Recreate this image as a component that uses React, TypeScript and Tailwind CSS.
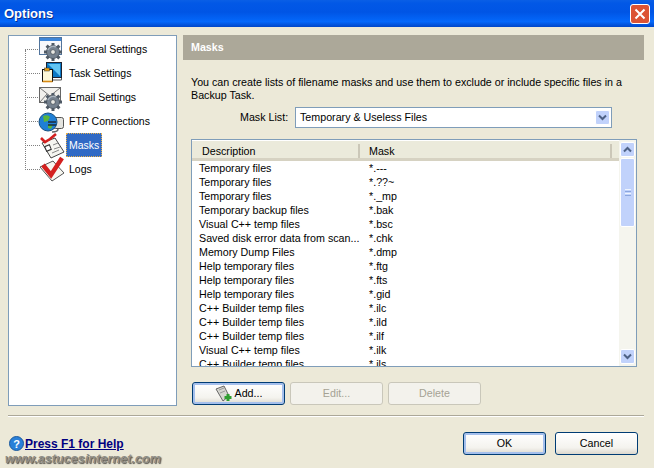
import type { ReactNode } from 'react';

const rows = [
  ['Temporary files', '*.---'],
  ['Temporary files', '*.??~'],
  ['Temporary files', '*._mp'],
  ['Temporary backup files', '*.bak'],
  ['Visual C++ temp files', '*.bsc'],
  ['Saved disk error data from scan...', '*.chk'],
  ['Memory Dump Files', '*.dmp'],
  ['Help temporary files', '*.ftg'],
  ['Help temporary files', '*.fts'],
  ['Help temporary files', '*.gid'],
  ['C++ Builder temp files', '*.ilc'],
  ['C++ Builder temp files', '*.ild'],
  ['C++ Builder temp files', '*.ilf'],
  ['Visual C++ temp files', '*.ilk'],
  ['C++ Builder temp files', '*.ils'],
];

function Gear({ x, y }: { x: number; y: number }) {
  return (
    <g transform={`translate(${x} ${y})`}>
      <path d="M0-9V9M-9 0H9M-6.4-6.4L6.4 6.4M-6.4 6.4L6.4-6.4" stroke="#4f5a66" strokeWidth="3" />
      <circle r="6.5" fill="#76828f" stroke="#46505b" strokeWidth=".8" />
      <path d="M-5-2A5.5 5.5 0 0 1 3-5" stroke="#a9b3bd" strokeWidth="1.4" fill="none" />
      <circle r="2.4" fill="#e9e9e4" stroke="#46505b" strokeWidth=".8" />
    </g>
  );
}

const icons: Record<string, ReactNode> = {
  general: (
    <>
      <rect x=".5" y="1.5" width="22" height="17" fill="#f7f8fb" stroke="#51749c" />
      <rect x="1" y="2" width="21" height="3" fill="#3e86d8" />
      <Gear x={14} y={16} />
    </>
  ),
  task: (
    <>
      <rect x="7.5" y="2.5" width="15" height="15" fill="#0b78c4" stroke="#1d2230" />
      <path d="M9 4h12v12z" fill="#62c4f2" />
      <path d="M22.5 18v2h-9" stroke="#555" fill="none" />
      <rect x="3.5" y="9.5" width="10" height="12" fill="#fdf8d8" stroke="#111" />
      <rect x="5.5" y="8" width="5" height="3" fill="#e8a31d" stroke="#333" strokeWidth=".5" />
      <path d="M3.5 21.5h10" stroke="#d98a12" strokeWidth="1.6" />
    </>
  ),
  email: (
    <>
      <rect x=".5" y="3.5" width="21" height="15" fill="#f1f0ec" stroke="#666" />
      <path d="M1 4l10 8 10-8M1 18l7-8M21 18l-7-8" stroke="#777" fill="none" />
      <Gear x={14} y={18} />
    </>
  ),
  ftp: (
    <>
      <rect x="14.5" y="9.5" width="10" height="11" rx="2" fill="#e4e4e0" stroke="#555" />
      <path d="M19 21q0 3-6 3" stroke="#666" fill="none" strokeWidth="1.5" />
      <circle cx="9" cy="14" r="9" fill="#1f7fd6" stroke="#17507f" />
      <path d="M4 8q5-2 7 1l-2 4-4 1zM9 16l5 1-2 4-3-1z" fill="#59b53c" />
      <path d="M9 14h8M9 17h8" stroke="#1b2c3c" strokeWidth="1.5" />
    </>
  ),
  masks: (
    <>
      <path d="M3 11l13-5 9 14-13 6z" fill="#f5f5f0" stroke="#444" />
      <path d="M14 13l5-2M15 17l6-2M13 21l7-3" stroke="#888" />
      <rect x="6.5" y="13.5" width="5" height="5" fill="#fff" stroke="#333" transform="rotate(-22 9 16)" />
      <path d="M2 6l4 4 5-3 6-5" fill="none" stroke="#d3201f" strokeWidth="2.6" />
    </>
  ),
  logs: (
    <>
      <path d="M1 11l13-6 11 12-12 8z" fill="#f7f6f0" stroke="#555" />
      <path d="M4 9l8 10 11-17" fill="none" stroke="#d3201f" strokeWidth="4.5" />
    </>
  ),
};

const tree = [
  ['General Settings', 'general'],
  ['Task Settings', 'task'],
  ['Email Settings', 'email'],
  ['FTP Connections', 'ftp'],
  ['Masks', 'masks'],
  ['Logs', 'logs'],
];

function XpButton({
  children,
  disabled,
  focused,
  className,
}: {
  children: ReactNode;
  disabled?: boolean;
  focused?: boolean;
  className: string;
}) {
  return (
    <button
      className={`flex h-[23px] items-center justify-center rounded-[3px] border ${
        disabled
          ? 'border-[#c9c7ba] bg-[#f3f2ec] text-[#a5a294]'
          : 'border-[#003c74] bg-[linear-gradient(#fff,#f4f3ee_70%,#dcd8ce)] text-black'
      } ${focused ? 'shadow-[inset_0_0_0_2px_#a4bfec]' : ''} ${className}`}
    >
      {children}
    </button>
  );
}

function ScrollButton({ up }: { up?: boolean }) {
  return (
    <div className="flex h-[15px] w-[15px] items-center justify-center rounded-[2px] border border-white bg-[#c1d2fb]">
      <svg width="9" height="7" viewBox="0 0 9 7">
        <path d={up ? 'M1 5.5l3.5-3.5 3.5 3.5' : 'M1 1.5l3.5 3.5 3.5-3.5'} fill="none" stroke="#4d6185" strokeWidth="2" />
      </svg>
    </div>
  );
}

export default function App() {
  return (
    <div className="flex h-[468px] w-[654px] flex-col overflow-hidden bg-[#ece9d8] font-['Liberation_Sans',sans-serif] text-[10.7px] text-black">
      <div className="flex h-[27px] shrink-0 items-center justify-between bg-[linear-gradient(#0a5fe6,#0258e6_12%,#0055e5_45%,#0468fb_80%,#0046c8)] pl-[4px] pr-[4px]">
        <span className="pt-[1px] text-[13px] font-bold text-white [text-shadow:1px_1px_#0a2f8c]">Options</span>
        <div className="flex h-[20px] w-[20px] items-center justify-center rounded-[3px] border border-white bg-[#dc5334]">
          <svg width="12" height="12" viewBox="0 0 12 12">
            <path d="M1.5 1.5l9 9M10.5 1.5l-9 9" stroke="#fff" strokeWidth="2" />
          </svg>
        </div>
      </div>

      <div className="flex pl-[8px] pt-[8px]">
        <div className="relative h-[371px] w-[169px] border border-[#7f9db9] bg-white pt-[1px]">
          <div className="absolute left-[16px] top-[14px] h-[120px] border-l border-dotted border-[#808080]" />
          {tree.map(([label, icon]) => (
            <div key={label} className="flex h-[24px] items-center pl-[16px]">
              <div className="w-[15px] border-t border-dotted border-[#808080]" />
              <svg width="26" height="26" viewBox="0 0 26 26" className="-ml-[1px] shrink-0 overflow-visible">
                {icons[icon]}
              </svg>
              <span
                className={`ml-[1px] flex h-[24px] items-center px-[2px] text-[10.5px] leading-none ${
                  label === 'Masks' ? 'border border-dotted border-[#e8b04a] bg-[#316ac5] text-white' : 'border border-transparent'
                }`}
              >
                {label}
              </span>
            </div>
          ))}
        </div>

        <div className="ml-[6px] w-[461px]">
          <div className="flex h-[25px] items-center bg-[#aca899] pl-[8px] font-bold text-white">Masks</div>
          <p className="mt-[16px] w-[440px] pl-[8px] leading-[13px]">
            You can create lists of filename masks and use them to exclude or include specific files in a Backup Task.
          </p>
          <div className="mt-[5px] flex h-[21px] items-center pl-[57px]">
            <span className="w-[55px]">Mask List:</span>
            <div className="flex h-[21px] w-[317px] items-center justify-between border border-[#7f9db9] bg-white pl-[4px] pr-[1px]">
              <span>Temporary &amp; Useless Files</span>
              <ScrollButton />
            </div>
          </div>

          <div className="ml-[8px] mt-[11px] flex h-[228px] w-[446px] border border-[#7f9db9] bg-white">
            <div className="min-w-0 flex-1 overflow-hidden">
              <div className="mt-[1px] flex h-[20px] items-center border-b-[3px] border-[#d6d2c2] bg-[#ebeadb] pt-[2px]">
                <span className="w-[168px] border-r-2 border-[#cbc7b8] pl-[10px] leading-[14px]">Description</span>
                <span className="flex-1 pl-[9px] leading-[14px]">Mask</span>
                <span className="mr-[7px] h-[14px] border-r-2 border-[#cbc7b8]" />
              </div>
              <div className="h-[206px] overflow-hidden">
                {rows.map(([name, mask], i) => (
                  <div key={i} className="flex h-[14px] items-center leading-[14px]">
                    <span className="w-[170px] truncate pl-[7px]">{name}</span>
                    <span className="pl-[7px]">{mask}</span>
                  </div>
                ))}
              </div>
            </div>
            <div className="flex w-[17px] shrink-0 flex-col bg-[#f5f5ee] pl-[1px] pt-[2px]">
              <ScrollButton up />
              <div className="mt-[1px] flex h-[69px] w-[15px] flex-col items-center justify-center gap-[1px] rounded-[2px] border border-white bg-[#c1d2fb]">
                <div className="h-[1px] w-[6px] bg-[#eef4fe]" />
                <div className="h-[1px] w-[6px] bg-[#8ba6de]" />
                <div className="h-[1px] w-[6px] bg-[#eef4fe]" />
                <div className="h-[1px] w-[6px] bg-[#8ba6de]" />
              </div>
              <div className="flex-1" />
              <div className="mb-[2px]">
                <ScrollButton />
              </div>
            </div>
          </div>

          <div className="ml-[9px] mt-[15px] flex gap-[5px]">
            <XpButton className="w-[93px]" focused>
              <svg width="18" height="18" viewBox="0 0 18 18" className="mr-[2px]">
                <path d="M1 4l8-3 5 10-6 5z" fill="#d6d6d0" stroke="#666" />
                <path d="M4 5l5-2M5 8l5-2" stroke="#999" />
                <path d="M13 9v7M9.5 12.5h7" stroke="#2f9e30" strokeWidth="3" />
              </svg>
              Add...
            </XpButton>
            <XpButton className="w-[93px]" disabled>
              Edit...
            </XpButton>
            <XpButton className="w-[93px]" disabled>
              Delete
            </XpButton>
          </div>
        </div>
      </div>

      <div className="ml-[8px] mt-[9px] h-[2px] w-[636px] border-b border-white bg-[#aca899]" />

      <div className="mt-[15px] flex items-center pl-[9px] pr-[16px]">
        <svg width="15" height="15" viewBox="0 0 15 15" className="shrink-0">
          <circle cx="7.5" cy="7.5" r="7" fill="#2a80d8" stroke="#1c5a9e" />
          <text x="7.5" y="11.5" textAnchor="middle" fontSize="11" fontWeight="700" fill="#fff">?</text>
        </svg>
        <a className="ml-[1px] text-[12px] font-bold text-[#000080] underline">Press F1 for Help</a>
        <div className="flex-1" />
        <XpButton className="w-[83px]" focused>OK</XpButton>
        <XpButton className="ml-[9px] w-[83px]">Cancel</XpButton>
      </div>

      <div className="mt-[-3px] pl-[5px] text-[12.7px] font-bold italic leading-[15px] text-[#8f8d85] [text-shadow:1px_1px_1px_#55534c]">
        www.astucesinternet.com
      </div>
    </div>
  );
}
